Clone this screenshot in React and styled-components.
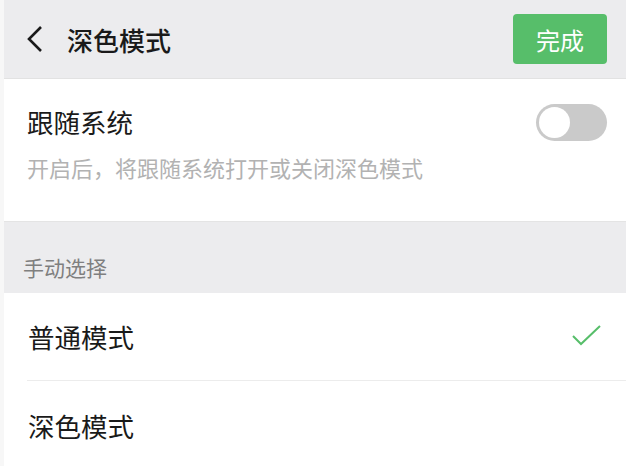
import React from 'react'
import styled, { createGlobalStyle } from 'styled-components'

const GlobalStyle = createGlobalStyle`
body {
  margin: 0;
  background: #f7f7f7;
  font-family: "Noto Sans CJK SC", "Noto Sans", sans-serif;
}
`

const Page = styled.div`
width: 626px;
height: 466px;
padding-left: 4px;
box-sizing: border-box;
display: flex;
flex-flow: column;
overflow: hidden;
`

const Header = styled.div`
height: 78px;
flex: none;
display: flex;
align-items: center;
background: #ececee;
border-bottom: 1px solid #e2e2e2;
padding: 0 19px 0 22px;
`

const Title = styled.h1`
flex: 1;
margin: 0 0 0 21px;
font-size: 26px;
font-weight: 500;
color: #1a1a1a;
`

const DoneButton = styled.button`
width: 94px;
height: 50px;
border: none;
border-radius: 4px;
background: #57be6a;
color: #fff;
font-family: inherit;
font-size: 24px;
`

const Block = styled.div`
background: #fff;
padding: ${props => props.padding || '0'};
`

const SwitchRow = styled.div`
display: flex;
align-items: center;
justify-content: space-between;
`

const Label = styled.div`
font-size: 26.5px;
line-height: 38px;
color: #1a1a1a;
`

const Hint = styled.div`
margin-top: 10px;
font-size: 22px;
line-height: 32px;
color: #b2b2b2;
`

const Toggle = styled.div`
width: 71px;
height: 37px;
border-radius: 19px;
background: #cacaca;
position: relative;

&::after {
  content: '';
  position: absolute;
  left: 3px;
  top: 3px;
  width: 31px;
  height: 31px;
  border-radius: 50%;
  background: #fff;
}
`

const SectionTitle = styled.div`
height: 72px;
flex: none;
box-sizing: border-box;
border-top: 1px solid #e4e4e4;
padding: 30px 0 0 19px;
font-size: 21px;
line-height: 30px;
color: #7f7f7f;
background: #ececee;
`

const OptionRow = styled.div`
height: 88px;
box-sizing: border-box;
margin-left: 23px;
padding: 1px 22px 0 0;
display: flex;
align-items: center;
justify-content: space-between;
border-bottom: ${props => (props.last ? 'none' : '1px solid #ececec')};
`

const OptionLabel = styled(Label)`
padding-left: 1px;
`

const BackIcon = () => (
  <svg width="20" height="30" viewBox="0 0 20 30">
    <polyline points="15,3 3,15 15,27" fill="none" stroke="#1a1a1a" strokeWidth="2.6" />
  </svg>
)

const Check = () => (
  <svg width="34" height="26" viewBox="0 0 34 26">
    <polyline points="3,12 11,20 30,2" fill="none" stroke="#57be6a" strokeWidth="2" />
  </svg>
)

const App = () => (
  <Page>
    <GlobalStyle />
    <Header>
      <BackIcon />
      <Title>深色模式</Title>
      <DoneButton>完成</DoneButton>
    </Header>

    <Block padding="24px 19px 38px 23px">
      <SwitchRow>
        <Label>跟随系统</Label>
        <Toggle />
      </SwitchRow>
      <Hint>开启后，将跟随系统打开或关闭深色模式</Hint>
    </Block>

    <SectionTitle>手动选择</SectionTitle>

    <Block>
      <OptionRow>
        <OptionLabel>普通模式</OptionLabel>
        <Check />
      </OptionRow>
      <OptionRow last>
        <OptionLabel>深色模式</OptionLabel>
      </OptionRow>
    </Block>
  </Page>
)

export default App
